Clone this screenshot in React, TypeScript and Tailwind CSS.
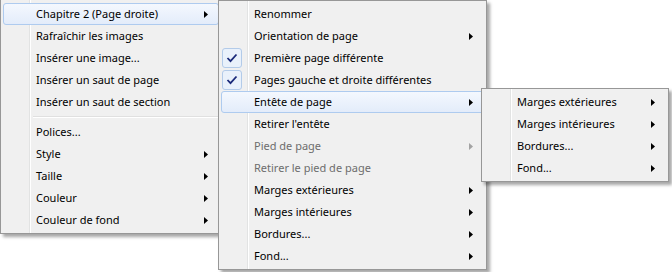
import React from 'react';

type Item =
  | { kind: 'sep' }
  | {
      kind?: 'item';
      label: string;
      sub?: boolean;
      checked?: boolean;
      disabled?: boolean;
      hot?: boolean;
    };

const mainMenu: Item[] = [
  { label: 'Chapitre 2 (Page droite)', sub: true, hot: true },
  { label: 'Rafraîchir les images' },
  { label: 'Insérer une image...' },
  { label: 'Insérer un saut de page' },
  { label: 'Insérer un saut de section' },
  { kind: 'sep' },
  { label: 'Polices...' },
  { label: 'Style', sub: true },
  { label: 'Taille', sub: true },
  { label: 'Couleur', sub: true },
  { label: 'Couleur de fond', sub: true },
];

const chapterMenu: Item[] = [
  { label: 'Renommer' },
  { label: 'Orientation de page', sub: true },
  { label: 'Première page différente', checked: true },
  { label: 'Pages gauche et droite différentes', checked: true },
  { label: 'Entête de page', sub: true, hot: true },
  { label: "Retirer l'entête" },
  { label: 'Pied de page', sub: true, disabled: true },
  { label: 'Retirer le pied de page', disabled: true },
  { label: 'Marges extérieures', sub: true },
  { label: 'Marges intérieures', sub: true },
  { label: 'Bordures...', sub: true },
  { label: 'Fond...', sub: true },
];

const headerMenu: Item[] = [
  { label: 'Marges extérieures', sub: true },
  { label: 'Marges intérieures', sub: true },
  { label: 'Bordures...', sub: true },
  { label: 'Fond...', sub: true },
];

const Arrow = ({ disabled }: { disabled?: boolean }) => (
  <svg width="4" height="7" viewBox="0 0 4 7" className="shrink-0 mt-[2px]">
    <path d="M0 0 L4 3.5 L0 7 Z" fill={disabled ? '#a3a3a3' : '#000'} />
  </svg>
);

// check box drawn in the gutter, over the row
const Check = () => (
  <div className="absolute left-[0px] top-[0px] w-[20px] h-[20px] rounded-[3px] border border-[#b3cbe9] bg-[#e9f1fb] flex items-center justify-center">
    <svg width="12" height="10" viewBox="0 0 12 10">
      <path d="M1.5 5 L4.5 8.2 L10.5 1.5" fill="none" stroke="#1b2a7a" strokeWidth="1.8" />
    </svg>
  </div>
);

function Menu({ items, className }: { items: Item[]; className: string }) {
  return (
    <div
      className={
        'absolute border border-[#979797] p-[2px] shadow-[3px_3px_3px_rgba(0,0,0,0.35)] ' +
        'bg-[#f0f0f0] bg-[linear-gradient(to_right,transparent_28px,#e2e3e3_28px,#e2e3e3_29px,#ffffff_29px,#ffffff_30px,transparent_30px)] ' +
        className
      }
    >
      {items.map((it, i) => {
        if (it.kind === 'sep') {
          return (
            <div key={i} className="h-[8px] flex flex-col justify-center pl-[30px]">
              <div className="border-t border-[#e0e0e0] border-b border-b-white" />
            </div>
          );
        }
        return (
          <div
            key={i}
            className={
              'relative h-[22px] flex items-center pl-[32px] pr-[10px] pb-[2px] rounded-[3px] border ' +
              (it.hot
                ? 'border-[#aecbef] bg-[linear-gradient(to_bottom,#f4f8fe,#e3ecfa)]'
                : 'border-transparent') +
              (it.disabled ? ' text-[#6d6d6d]' : ' text-black')
            }
          >
            {it.checked && <Check />}
            <span className="flex-1 whitespace-nowrap">{it.label}</span>
            {it.sub && <Arrow disabled={it.disabled} />}
          </div>
        );
      })}
    </div>
  );
}

export default function App() {
  return (
    <div
      className="relative w-[672px] h-[272px] overflow-hidden bg-white text-[11px] leading-none"
      style={{ fontFamily: '"Segoe UI", "Noto Sans", sans-serif' }}
    >
      <Menu items={mainMenu} className="left-[0px] -top-[1px] w-[222px] pt-[3px]" />
      <Menu items={chapterMenu} className="left-[218px] top-[0px] w-[269px]" />
      <Menu items={headerMenu} className="left-[481px] top-[88px] w-[188px]" />
    </div>
  );
}
